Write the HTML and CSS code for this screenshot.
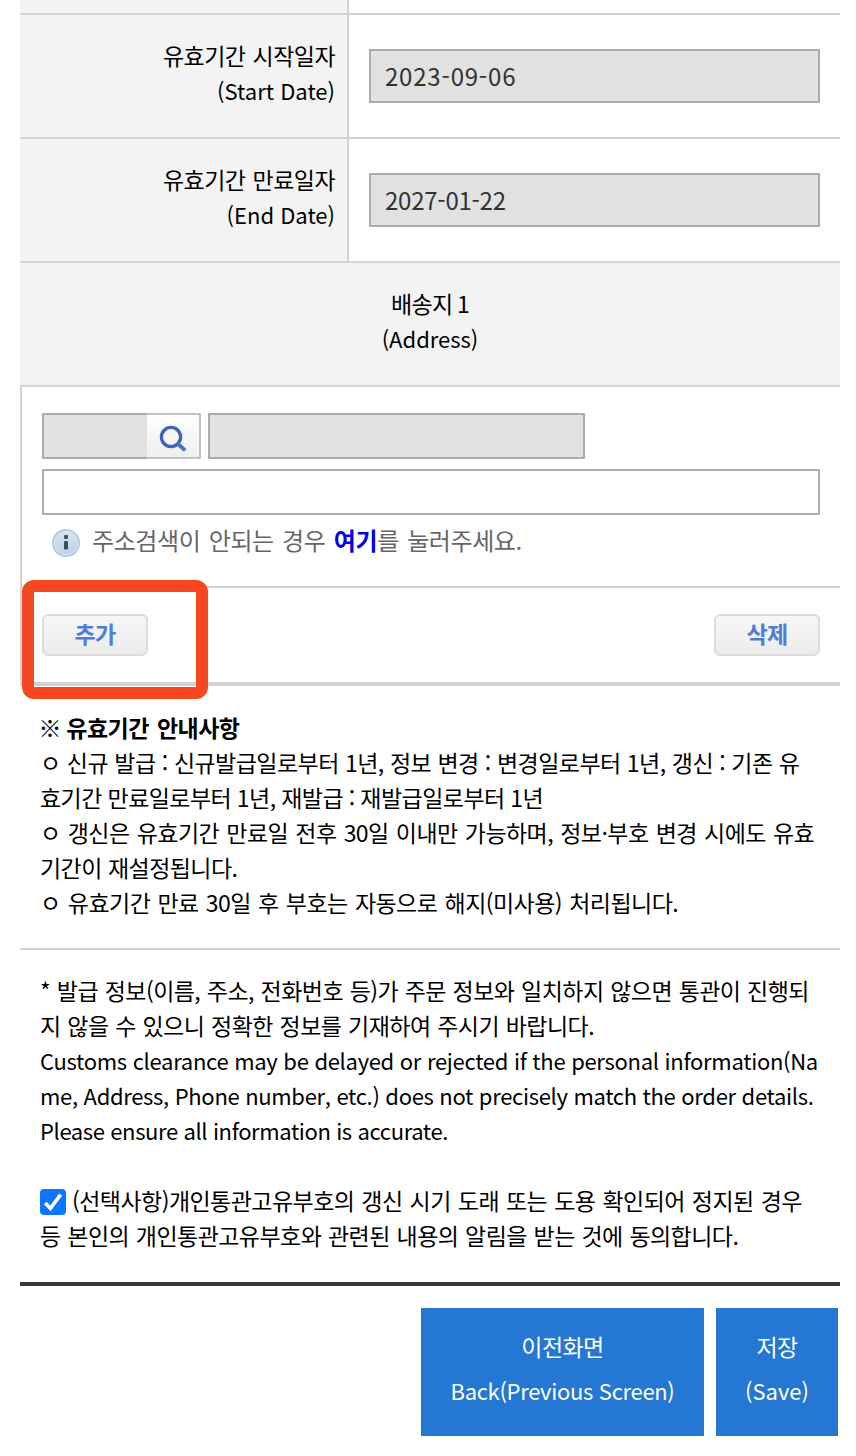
FILE: index.html
```html
<!DOCTYPE html>
<html lang="ko">
<head>
<meta charset="utf-8">
<title>개인통관고유부호</title>
<link rel="stylesheet" href="styles.css">
</head>
<body>
<main class="page">
  <section class="form">
    <div class="row row-top"><div class="label"></div><div class="field"></div></div>
    <div class="row">
      <div class="label"><span>유효기간 시작일자</span><span class="en">(Start Date)</span></div>
      <div class="field"><div class="input date">2023-09-06</div></div>
    </div>
    <div class="row">
      <div class="label"><span>유효기간 만료일자</span><span class="en">(End Date)</span></div>
      <div class="field"><div class="input date date-end">2027-01-22</div></div>
    </div>
    <div class="address-title"><span class="title-ko">배송지 1</span><span class="en">(Address)</span></div>
    <div class="address-area">
      <div class="address-box">
        <div class="search-row">
          <div class="zip">
            <div class="input zip-input"></div>
            <button class="search" aria-label="검색">
              <svg width="28" height="28" viewBox="0 0 28 28"><circle cx="12" cy="12" r="9.6" fill="none" stroke="#3f63b5" stroke-width="3.3"/><path d="M18.6 18.8 26.2 25.4" stroke="#4c6fbd" stroke-width="3.8"/></svg>
            </button>
          </div>
          <div class="input address-main"></div>
        </div>
        <div class="input address-detail"></div>
        <div class="hint">
          <svg width="28" height="28" viewBox="0 0 28 28"><defs><linearGradient id="info" x2="0" y2="1"><stop stop-color="#d3e2f1"/><stop offset="1" stop-color="#bcd3e9"/></linearGradient></defs><circle cx="14" cy="14" r="13.2" fill="#d2e0ef" stroke="#b1c8e0" stroke-width="1.6"/><circle cx="14" cy="14" r="11" fill="url(#info)"/><rect x="12" y="6" width="4" height="4" rx="1" fill="#414f5e"/><rect x="12" y="12" width="4" height="8.5" rx="1" fill="#414f5e"/></svg>
          <span>주소검색이 안되는 경우 <b>여기</b>를 눌러주세요.</span>
        </div>
      </div>
      <div class="actions">
        <button class="small-btn">추가</button>
        <button class="small-btn">삭제</button>
        <i class="highlight"></i>
      </div>
    </div>
  </section>
  <section class="notice">
    <span class="strong"><span class="mark">※</span> 유효기간 안내사항</span>
    <span class="l1">ㅇ 신규 발급 : 신규발급일로부터 1년, 정보 변경 : 변경일로부터 1년, 갱신 : 기존 유</span>
    <span class="l2">효기간 만료일로부터 1년, 재발급 : 재발급일로부터 1년</span>
    <span class="l3">ㅇ 갱신은 유효기간 만료일 전후 30일 이내만 가능하며, 정보·부호 변경 시에도 유효</span>
    <span class="l4">기간이 재설정됩니다.</span>
    <span class="l5">ㅇ 유효기간 만료 30일 후 부호는 자동으로 해지(미사용) 처리됩니다.</span>
  </section>
  <section class="consent">
    <span class="l6">* 발급 정보(이름, 주소, 전화번호 등)가 주문 정보와 일치하지 않으면 통관이 진행되</span>
    <span class="l7">지 않을 수 있으니 정확한 정보를 기재하여 주시기 바랍니다.</span>
    <span class="en e1">Customs clearance may be delayed or rejected if the personal information(Na</span>
    <span class="en e2">me, Address, Phone number, etc.) does not precisely match the order details.</span>
    <span class="en e3">Please ensure all information is accurate.</span>
    <div class="agree">
      <svg class="check" width="26" height="26" viewBox="0 0 26 26"><rect width="26" height="26" rx="4" fill="#0b76ff"/><path d="M5.3 14 10.4 19.4 20.6 5.6" fill="none" stroke="#fff" stroke-width="3.6"/></svg>
      <span class="l8">(선택사항)개인통관고유부호의 갱신 시기 도래 또는 도용 확인되어 정지된 경우</span>
    </div>
    <span class="l9">등 본인의 개인통관고유부호와 관련된 내용의 알림을 받는 것에 동의합니다.</span>
  </section>
  <footer class="footer">
    <button class="main-btn back"><span>이전화면</span><span class="en">Back(Previous Screen)</span></button>
    <button class="main-btn save"><span>저장</span><span class="en">(Save)</span></button>
  </footer>
</main>
</body>
</html>
```

FILE: styles.css
```css
* { box-sizing: border-box; }
body {
  margin: 0;
  background: #fff;
  color: #000;
  font: 23px/35px "Noto Sans CJK KR", sans-serif;
  letter-spacing: -0.55px;
  word-spacing: 1.3px;
}
button { font: inherit; letter-spacing: inherit; word-spacing: inherit; padding: 0; margin: 0; }
.page { width: 820px; margin: 0 16px 0 20px; }
span { white-space: nowrap; }
.en { font-size: 22px; letter-spacing: 0; word-spacing: 0; }

.row { display: flex; height: 124px; border-bottom: 2px solid #d2d2d2; }
.row-top { height: 15px; }
.label {
  display: flex; flex-direction: column; align-items: flex-end;
  width: 329px; padding: 23px 12px 0 0;
  background: #f3f3f3; border-right: 2px solid #d2d2d2;
}
.row-top .label { padding: 0; }
.field { flex: 1; padding: 34px 20px 0; }
.row-top .field { padding: 0; }
.input { border: 2px solid #acacac; background: #e1e1e1; }
.date { height: 54px; padding: 0 14px; line-height: 50px; color: #333; font-size: 24px; letter-spacing: 0.8px; }
.date-end { letter-spacing: -0.25px; }
.address-title {
  display: flex; flex-direction: column; align-items: center;
  height: 124px; padding-top: 23px;
  background: #f3f3f3; border-bottom: 2px solid #d2d2d2;
}
.title-ko { word-spacing: -1.7px; }

.address-area { border-left: 2px solid #d2d2d2; border-bottom: 4px solid #d2d2d2; }
.address-box {
  display: flex; flex-direction: column;
  height: 201px; padding: 26px 20px 0; border-bottom: 2px solid #d2d2d2;
}
.search-row { display: flex; gap: 7px; height: 46px; }
.zip { display: flex; width: 159px; }
.zip-input { width: 105px; border-right: 0; }
.search {
  display: flex; align-items: flex-start;
  width: 54px; height: 46px; padding: 9.7px 0 0 11.7px;
  border: 2px solid #c3c3c3; border-left: 0;
  background: linear-gradient(#fff, #eee);
}
.search svg, .check, .hint svg { display: block; flex: none; }
.address-main { width: 377px; }
.address-detail { height: 46px; margin-top: 10px; background: #fff; }
.hint {
  display: flex; gap: 12px; margin: 7px 0 0 10px; color: #666;
  font-size: 24px; letter-spacing: -0.4px; word-spacing: 2px;
}
.hint svg { margin-top: 7px; }
.hint b { color: #00e; }
.actions {
  position: relative; display: flex; justify-content: space-between;
  height: 94px; padding: 26px 20px 0;
}
.small-btn {
  width: 106px; height: 42px; padding-bottom: 4px; line-height: 34px;
  border: 2px solid #dcdcdc; border-radius: 6px;
  background: linear-gradient(#f7f7f7, #ececec);
  color: #4f7dd9; font-weight: 700;
}
.highlight {
  position: absolute; left: 0; top: -8px; width: 186px; height: 119px;
  border: 12px solid #f54722; border-radius: 12px;
}

.notice { display: flex; flex-direction: column; padding: 24px 20px 28px; border-bottom: 2px solid #d2d2d2; }
.strong { font-weight: 700; word-spacing: 2.3px; }
.mark { margin-left: -1.5px; letter-spacing: -3.4px; }
.consent { display: flex; flex-direction: column; padding: 23px 20px 29px; border-bottom: 4px solid #3c3835; }
.agree { display: flex; gap: 6px; margin-top: 35px; }
.check { margin-top: 6px; }

/* Per-line spacing keeps each line at its measured width */
.l1 { word-spacing: 0.35px; }
.l2 { word-spacing: -0.2px; }
.l3 { word-spacing: 1.25px; }
.l4 { word-spacing: 0.2px; }
.l5 { word-spacing: 1.3px; }
.l6 { word-spacing: 0.75px; }
.l7 { word-spacing: 0.8px; }
.l8 { word-spacing: 1.1px; }
.l9 { word-spacing: 0.8px; }
.e1 { letter-spacing: -0.3px; }
.e2 { letter-spacing: -0.32px; }
.e3 { letter-spacing: -0.39px; }

.footer { display: flex; justify-content: flex-end; gap: 12px; padding: 22px 2px 20px; }
.main-btn {
  display: flex; flex-direction: column; align-items: center;
  height: 128px; padding-top: 16px;
  border: 0; background: #2477d2; color: #fff; line-height: 44px;
}
.back { width: 283px; }
.back .en { letter-spacing: -0.32px; }
.save { width: 122px; }
```
